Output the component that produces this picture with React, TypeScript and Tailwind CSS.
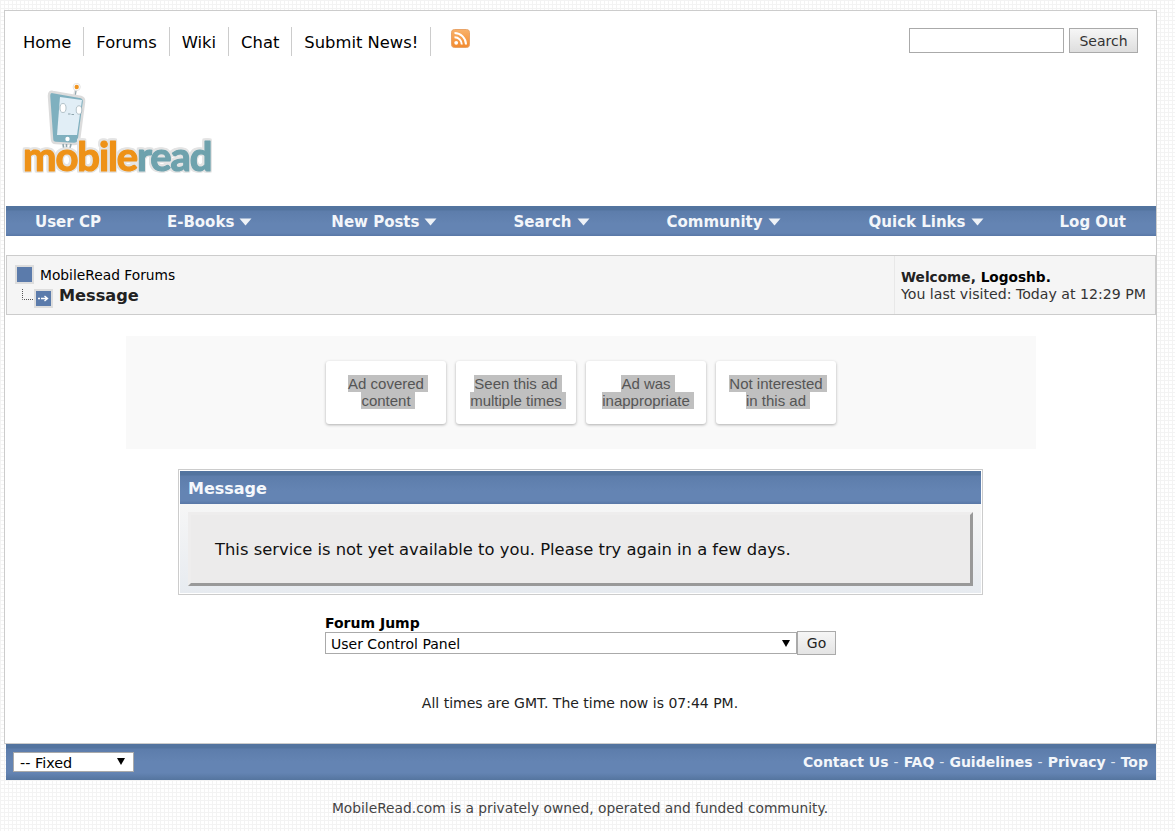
import React from "react";

const Caret = () => (
  <svg width="13" height="8" viewBox="0 0 13 8" className="ml-[5px] inline-block">
    <path d="M0.5 0.5H12.5L6.5 7.5Z" fill="#eef2f7" />
  </svg>
);

const navItems = [
  { t: "User CP", c: false, cls: "ml-[29px]" },
  { t: "E-Books", c: true, cls: "ml-[66px]" },
  { t: "New Posts", c: true, cls: "ml-[79px]" },
  { t: "Search", c: true, cls: "ml-[76px]" },
  { t: "Community", c: true, cls: "ml-[77px]" },
  { t: "Quick Links", c: true, cls: "ml-[88px]" },
  { t: "Log Out", c: false, cls: "ml-[76px]" },
];

const barBg =
  "bg-[linear-gradient(#53749f_0,#53749f_4px,#5d7dab_5px,#6484b3_60%,#6484b3_90%,#5877a6_100%)]";

function Logo() {
  return (
    <svg width="196" height="104" viewBox="0 0 196 104" className="block">
      <g transform="translate(-22,-83)">
        <path d="M74 98 L76.5 87" stroke="#e2e2e2" strokeWidth="3" />
        <line x1="75" y1="97" x2="76.5" y2="87" stroke="#8fa5ad" strokeWidth="1" />
        <circle cx="76.7" cy="87" r="3.6" fill="#fff" stroke="#e4e4e4" />
        <circle cx="76.7" cy="87" r="2.2" fill="#ef9420" />
        <path
          d="M53 92 L81 97 Q84.5 98 84 102 L79 140 Q78 144 74 144 L56 143 Q52 143 52 139 L49 96 Q49 91 53 92 Z"
          fill="#7fb0bf"
          stroke="#dcdcdc"
          strokeWidth="2.5"
        />
        <path d="M60 97 L82 100 L77 135 L57 135 Z" fill="#e1eef6" />
        <ellipse cx="63" cy="108" rx="3" ry="4.5" fill="#fff" stroke="#8a9ea6" strokeWidth="0.6" />
        <ellipse cx="79" cy="110" rx="2.8" ry="4.2" fill="#fff" stroke="#8a9ea6" strokeWidth="0.6" />
        <path d="M68 114 h2.5 M71.5 114.5 h2.5" stroke="#8fa5ad" strokeWidth="1" />
        <circle cx="67.5" cy="139" r="2.2" fill="#fff" />
        <path d="M63 144 L65 156 M66.5 144 L66.5 156 M71 144 L68 156" stroke="#8fa5ad" strokeWidth="1.6" />
        <g className="[filter:drop-shadow(1.5px_0_0_#e4e4e4)_drop-shadow(-1.5px_0_0_#e4e4e4)_drop-shadow(0_1.5px_0_#e4e4e4)_drop-shadow(0_-1.5px_0_#e4e4e4)]">
          <text
            x="23"
            y="171"
            fontFamily="Lato, 'Noto Sans', sans-serif"
            fontWeight="700"
            fontSize="40"
            letterSpacing="-1.1"
            strokeWidth="1.2"
            strokeLinejoin="round"
          >
            <tspan fill="#ee9218" stroke="#ee9218">mobile</tspan>
            <tspan fill="#6ea2ad" stroke="#6ea2ad">read</tspan>
          </text>
        </g>
      </g>
    </svg>
  );
}

function Rss() {
  return (
    <svg width="19" height="19" viewBox="0 0 19 19" className="block">
      <defs>
        <linearGradient id="rssg" x1="0" y1="0" x2="0" y2="1">
          <stop offset="0" stopColor="#f9b26a" />
          <stop offset="1" stopColor="#f28a2e" />
        </linearGradient>
      </defs>
      <rect x="0.5" y="0.5" width="18" height="18" rx="3" fill="url(#rssg)" stroke="#e9a468" />
      <circle cx="5.2" cy="13.8" r="1.9" fill="#fff" />
      <path d="M3.5 8.2 A7.3 7.3 0 0 1 10.8 15.5" fill="none" stroke="#fff" strokeWidth="2" />
      <path d="M3.5 4 A11.5 11.5 0 0 1 15 15.5" fill="none" stroke="#fff" strokeWidth="2" />
    </svg>
  );
}

const Cell = ({ a, b }: { a: string; b: string }) => (
  <div className="flex h-[63px] w-[120px] flex-col items-center justify-center rounded-[3px] bg-white pb-[2px] text-center font-['Liberation_Sans',Arial,sans-serif] text-[15px] leading-[17px] text-[#555] shadow-[0_1px_3px_rgba(0,0,0,0.3)]">
    <span className="mr-[-4px] inline-block bg-[#c0c0c0] pr-[4px]">{a}</span>
    <span className="mr-[-4px] inline-block bg-[#c0c0c0] pr-[4px]">{b}</span>
  </div>
);

const Sep = () => <span className="mx-[5px] font-normal text-[#dfe6f0]">-</span>;

export default function App() {
  return (
    <div className="h-[831px] overflow-hidden bg-white bg-[linear-gradient(#f3f3f3_1px,transparent_1px),linear-gradient(90deg,#f3f3f3_1px,transparent_1px)] bg-size-[4px_4px] pl-[4px] pt-[10px] font-['DejaVu_Sans',Verdana,sans-serif] text-black">
      <div className="h-[734px] w-[1153px] border border-[#ccc] bg-white pl-[1px]">
        <div className="flex h-[195px] items-start">
          <div className="flex-1 pl-[17px] pt-[16px]">
            <div className="flex items-start">
              <ul className="flex text-[16.37px] leading-[27px]">
                {["Home", "Forums", "Wiki", "Chat", "Submit News!"].map((t) => (
                  <li key={t} className="border-r border-[#ccc] px-[12px] pt-[2px] first:pl-0">
                    {t}
                  </li>
                ))}
              </ul>
              <div className="ml-[20px] mt-[2px]">
                <Rss />
              </div>
            </div>
            <div className="ml-[-1px] mt-[27px]">
              <Logo />
            </div>
          </div>
          <div className="mr-[18px] mt-[17px] flex gap-[5px]">
            <input className="h-[25px] w-[155px] border border-[#aaa] bg-white outline-none" />
            <button className="h-[25px] w-[69px] border border-[#aaa] bg-[linear-gradient(#f6f6f6,#dedede)] pt-[1px] text-[14px] text-[#333]">
              Search
            </button>
          </div>
        </div>

        <div className={`flex h-[30px] items-center pt-[2px] text-[15px] font-bold text-[#f3f6fa] ${barBg}`}>
          {navItems.map((n) => (
            <span key={n.t} className={`flex items-center whitespace-nowrap ${n.cls}`}>
              {n.t}
              {n.c && <Caret />}
            </span>
          ))}
        </div>

        <div className="mt-[19px] flex h-[60px] border border-[#ccc] bg-[#f5f5f5]">
          <div className="flex-1 pl-[8px] pt-[8px]">
            <div className="flex items-center text-[13.8px] leading-[19px]">
              <span className="flex h-[19px] w-[19px] items-center justify-center border-2 border-[#ddd] bg-[#5b7bab]" />
              <span className="ml-[6px] mt-[2px]">MobileRead Forums</span>
            </div>
            <div className="mt-[4px] flex h-[19px] items-center">
              <svg width="19" height="19" viewBox="0 0 19 19" className="block">
                <path d="M7.5 0 V10.5 H19" fill="none" stroke="#555" strokeDasharray="1 1" />
              </svg>
              <span className="flex h-[19px] w-[19px] items-center justify-center border-2 border-[#ddd] bg-[#5b7bab]">
                <svg width="11" height="7" viewBox="0 0 11 7">
                  <path d="M0 3.5H2M3 3.5H9M6.5 1L9.5 3.5L6.5 6" fill="none" stroke="#fff" strokeWidth="1.4" />
                </svg>
              </span>
              <span className="ml-[6px] mt-[-5px] text-[16.2px] font-bold text-[#222]">Message</span>
            </div>
          </div>
          <div className="w-[261px] border-l border-[#e8e8e8] pl-[6px] pt-[13px] text-[14.15px] leading-[17px] text-[#333]">
            <div className="text-[13.7px] font-bold text-[#222]">
              Welcome, <span className="text-black">Logoshb.</span>
            </div>
            <div>You last visited: Today at 12:29 PM</div>
          </div>
        </div>

        <div className="ml-[120px] mt-[21px] flex h-[113px] w-[910px] items-center justify-center gap-[10px] bg-[#f9f9f9]">
          <Cell a="Ad covered" b="content" />
          <Cell a="Seen this ad" b="multiple times" />
          <Cell a="Ad was" b="inappropriate" />
          <Cell a="Not interested" b="in this ad" />
        </div>

        <div className="ml-[172px] mt-[20px] h-[126px] w-[805px] border border-[#ccc] p-[1px]">
          <div className={`flex h-[33px] items-center pl-[8px] pt-[2px] text-[16px] font-bold text-[#f5f8fc] ${barBg}`}>
            Message
          </div>
          <div className="h-[89px] bg-[linear-gradient(#f6f6f6,#e7ebf0)] pl-[8px] pr-[8px] pt-[8px]">
            <div className="flex h-[74px] items-center border-[3px] border-b-[#999] border-l-[#eeeded] border-r-[#999] border-t-[#eeeded] bg-[#ecebeb] pl-[24px] pt-[2px] text-[16.37px] text-[#111]">
              This service is not yet available to you. Please try again in a few days.
            </div>
          </div>
        </div>

        <div className="ml-[319px] mt-[20px] w-[511px]">
          <div className="text-[14px] font-bold leading-[16px]">Forum Jump</div>
          <div className="flex items-center">
            <div className="relative">
              <select className="block h-[22px] w-[472px] appearance-none border border-[#aaa] bg-white pl-[5px] pt-[1px] text-[14px] outline-none">
                <option>User Control Panel</option>
              </select>
              <span className="pointer-events-none absolute right-[7px] top-[8px] h-0 w-0 border-x-[4px] border-t-[7px] border-x-transparent border-t-black" />
            </div>
            <button className="h-[24px] w-[39px] border border-[#aaa] bg-[linear-gradient(#f6f6f6,#e4e4e4)] text-[14px] text-[#222]">
              Go
            </button>
          </div>
        </div>

        <div className="mt-[40px] pr-[2px] text-center text-[14px] leading-[17px] text-[#222]">
          All times are GMT. The time now is 07:44 PM.
        </div>
      </div>

      <div className="ml-[2px] flex h-[36px] w-[1150px] items-center justify-between bg-[linear-gradient(#53749f_0,#53749f_4px,#5d7dab_5px,#6484b3_50%,#6484b3_80%,#55759f_100%)] pl-[7px] pr-[8px] text-[14px] font-bold text-[#f3f6fa]">
        <div className="relative">
          <select className="block h-[20px] w-[121px] appearance-none border border-[#aaa] bg-white pb-[2px] pl-[6px] text-[14.4px] font-normal text-black outline-none">
            <option>-- Fixed</option>
          </select>
          <span className="pointer-events-none absolute right-[9px] top-[6px] h-0 w-0 border-x-[4px] border-t-[7px] border-x-transparent border-t-black" />
        </div>
        <div className="flex items-center">
          Contact Us<Sep />FAQ<Sep />Guidelines<Sep />Privacy<Sep />Top
        </div>
      </div>

      <div className="mt-[20px] w-[1152px] text-center text-[13.8px] leading-[17px] text-[#444]">
        MobileRead.com is a privately owned, operated and funded community.
      </div>
    </div>
  );
}
